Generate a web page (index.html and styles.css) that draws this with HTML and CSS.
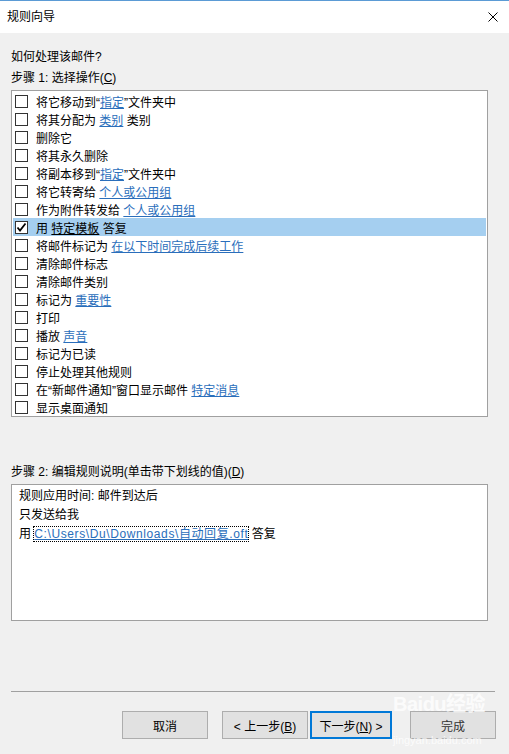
FILE: index.html
```html
<!DOCTYPE html>
<html lang="zh-CN">
<head>
    <meta charset="UTF-8">
    <meta name="viewport" content="width=device-width, initial-scale=1.0">
    <title>规则向导</title>
    <link rel="stylesheet" href="styles.css">
</head>
<body>
    <div class="window">
        <!-- 标题栏 -->
        <div class="titlebar">
            <span class="title">规则向导</span>
            <svg class="close" width="10" height="10" viewBox="0 0 10 10">
                <path d="M0.5 0.5 L9.5 9.5 M9.5 0.5 L0.5 9.5" stroke="#000" stroke-width="1" fill="none"/>
            </svg>
        </div>

        <div class="content">
            <p class="prompt">如何处理该邮件?</p>
            <p class="label">步骤 1: 选择操作(<u>C</u>)</p>

            <ul class="actions">
                <li><span class="box"></span><span>将它移动到“<a>指定</a>”文件夹中</span></li>
                <li><span class="box"></span><span>将其分配为 <a>类别</a> 类别</span></li>
                <li><span class="box"></span><span>删除它</span></li>
                <li><span class="box"></span><span>将其永久删除</span></li>
                <li><span class="box"></span><span>将副本移到“<a>指定</a>”文件夹中</span></li>
                <li><span class="box"></span><span>将它转寄给 <a>个人或公用组</a></span></li>
                <li><span class="box"></span><span>作为附件转发给 <a>个人或公用组</a></span></li>
                <li class="selected"><span class="box">
                    <svg width="11" height="11" viewBox="0 0 11 11"><path d="M1.5 5.5 L4 8.5 L9.5 1.5" stroke="#000" stroke-width="1.8" fill="none"/></svg>
                </span><span>用 <a>特定模板</a> 答复</span></li>
                <li><span class="box"></span><span>将邮件标记为 <a>在以下时间完成后续工作</a></span></li>
                <li><span class="box"></span><span>清除邮件标志</span></li>
                <li><span class="box"></span><span>清除邮件类别</span></li>
                <li><span class="box"></span><span>标记为 <a>重要性</a></span></li>
                <li><span class="box"></span><span>打印</span></li>
                <li><span class="box"></span><span>播放 <a>声音</a></span></li>
                <li><span class="box"></span><span>标记为已读</span></li>
                <li><span class="box"></span><span>停止处理其他规则</span></li>
                <li><span class="box"></span><span>在“新邮件通知”窗口显示邮件 <a>特定消息</a></span></li>
                <li><span class="box"></span><span>显示桌面通知</span></li>
            </ul>

            <p class="label step2">步骤 2: 编辑规则说明(单击带下划线的值)(<u>D</u>)</p>

            <div class="description">
                <p>规则应用时间: 邮件到达后</p>
                <p>只发送给我</p>
                <p>用 <a class="focused">C:\Users\Du\Downloads\自动回复.oft</a> 答复</p>
            </div>
        </div>

        <hr class="separator">

        <div class="buttons">
            <button class="btn">取消</button>
            <button class="btn back">&lt; 上一步(<u>B</u>)</button>
            <button class="btn next">下一步(<u>N</u>) &gt;</button>
            <button class="btn finish">完成</button>
        </div>

        <div class="watermark wm-top">Bai<span class="paw">du</span>经验</div>
        <div class="watermark wm-bottom">jingyan.baidu.com</div>
    </div>
</body>
</html>
```

FILE: styles.css
```css
body {
    margin: 0;
    font-family: "Liberation Sans", "Noto Sans CJK SC", sans-serif;
    font-size: 12px;
    color: #000;
    background-color: #f0f0f0;
}
p {
    margin: 0;
}
.window {
    position: relative;
    width: 509px;
    height: 754px;
    background-color: #f0f0f0;
    overflow: hidden;
}
.titlebar {
    display: flex;
    align-items: center;
    justify-content: space-between;
    height: 32px;
    padding: 0 11px 0 7px;
    background-color: #fff;
    border-top: 1px solid #5b9bd5;
}
.title {
    line-height: 32px;
}
.close {
    display: block;
}
.content {
    padding: 15px 21px 0 11px;
}
.prompt,
.label {
    line-height: 18px;
}
.label {
    margin-top: 3px;
}
.actions {
    list-style: none;
    margin: 3px 0 0;
    padding: 1px 1px 0;
    background-color: #fff;
    border: 1px solid #a0a0a0;
    height: 324px;
}
.actions li {
    display: flex;
    align-items: center;
    height: 18px;
    white-space: pre;
}
.actions li.selected {
    background-color: #a5cff0;
}
.actions li.selected a {
    color: #000;
}
.box {
    display: flex;
    align-items: center;
    justify-content: center;
    flex: none;
    box-sizing: border-box;
    width: 13px;
    height: 13px;
    margin: 0 8px 0 2px;
    border: 1px solid #333;
    background-color: #fff;
}
a {
    color: #2a6ebb;
    text-decoration: underline;
    cursor: pointer;
}
.step2 {
    margin-top: 46px;
}
.description {
    box-sizing: border-box;
    height: 137px;
    margin-top: 3px;
    padding: 2px 7px;
    background-color: #fff;
    border: 1px solid #a0a0a0;
}
.description p {
    line-height: 19px;
}
.focused {
    outline: 1px dotted #000;
    outline-offset: 0;
    letter-spacing: 0.6px;
}
.separator {
    margin: 70px 14px 0 11px;
    border: 0;
    border-top: 1px solid #a0a0a0;
    height: 0;
}
.buttons {
    display: flex;
    justify-content: flex-end;
    padding: 19px 13px 0 0;
}
.btn {
    box-sizing: border-box;
    width: 86px;
    height: 28px;
    padding: 0;
    font-family: inherit;
    font-size: 12px;
    color: #000;
    background-color: #e1e1e1;
    border: 1px solid #adadad;
}
.back {
    margin-left: 14px;
}
.next {
    width: 82px;
    margin-left: 2px;
    border: 2px solid #0078d7;
}
.finish {
    margin-left: 18px;
    color: #333;
}
.watermark {
    position: absolute;
    left: 393px;
    color: rgba(255, 255, 255, 0.8);
    pointer-events: none;
    white-space: nowrap;
}
.wm-top {
    top: 694px;
    font-size: 20px;
    font-weight: bold;
    line-height: 20px;
    letter-spacing: -0.5px;
}
.wm-bottom {
    top: 734px;
    font-size: 11px;
    line-height: 12px;
}
```
